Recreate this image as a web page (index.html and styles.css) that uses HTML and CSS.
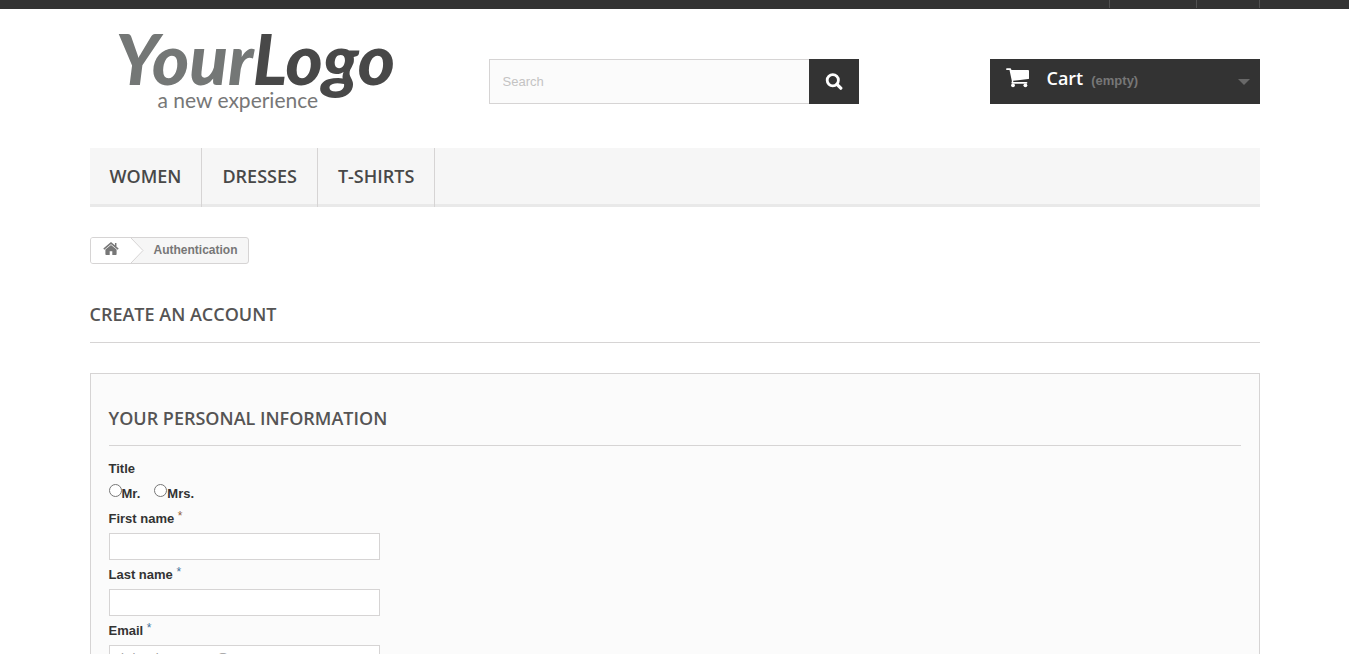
FILE: index.html
```html
<!DOCTYPE html>
<html lang="en">
<head>
<meta charset="utf-8">
<meta name="viewport" content="width=device-width, initial-scale=1">
<title>Create an account</title>
<link rel="stylesheet" href="styles.css">
</head>
<body>
<div class="topbar"><div class="container topbar-cells"><span class="cell cell-wide"></span><span class="cell"></span></div></div>
<div class="container">
  <header class="header">
    <a class="logo" href="#">
      <span class="logo-name"><span class="logo-your">Your</span><span class="logo-rest">Logo</span></span>
      <span class="logo-tag">a new experience</span>
    </a>
    <form class="search">
      <input class="search-input" type="text" placeholder="Search" aria-label="Search">
      <button class="search-button" type="button" aria-label="Submit search">
        <svg width="18" height="18" viewBox="0 0 18 18" fill="none" stroke="#fff"><circle cx="7.8" cy="7.2" r="5.6" stroke-width="2.8"/><path d="M12 11.400l3.8 3.8" stroke-width="3.2" stroke-linecap="round"/></svg>
      </button>
    </form>
    <a class="cart" href="#">
      <svg class="cart-icon" width="24" height="20" viewBox="0 0 24 20" fill="#fff"><path d="M0 1.2Q0 .3 1 .3H4.200Q5 .3 5.200 1.200L5.400 2H22.200Q23 2 23 2.900V10.200Q23 11 22.200 11.100L7.200 12.800 7.300 14H20.500Q21.400 14 21.400 14.800T20.500 15.700H6.300Q5.400 15.700 5.400 14.800L5.900 13.200 3.500 2H1Q0 2 0 1.200Z"/><circle cx="7" cy="17.300" r="1.900"/><circle cx="19.400" cy="17.300" r="1.900"/></svg>
      <b class="cart-title">Cart</b><span class="cart-count">(empty)</span>
      <svg class="cart-arrow" width="12" height="6" viewBox="0 0 12 6"><path d="M0 0h12L6 6z" fill="#686868"/></svg>
    </a>
  </header>
  <nav class="menu"><a href="#">WOMEN</a><a href="#">DRESSES</a><a href="#">T-SHIRTS</a></nav>
  <div class="breadcrumb">
    <a class="home" href="#" aria-label="Home">
      <svg width="16" height="14" viewBox="0 0 16 14" fill="#777"><path d="M8 2.900L13.600 7.600V12.200Q13.600 13 12.800 13H9.300V9.200H6.700V13H3.200Q2.400 13 2.400 12.200V7.600Z"/><path d="M.8 7.100L8 1.100l7.200 6M12.700 1v4" fill="none" stroke="#777" stroke-width="1.500"/></svg>
    </a>
    <svg class="chevron" width="13" height="25" viewBox="0 0 13 25"><path d="M0 0L12 12.500 0 25z" fill="#fff"/><path d="M0 0L12 12.500 0 25" fill="none" stroke="#d6d4d4"/></svg>
    <span class="crumb">Authentication</span>
  </div>
  <h1 class="page-title">CREATE AN ACCOUNT</h1>
  <form class="box">
    <h2 class="box-title">YOUR PERSONAL INFORMATION</h2>
    <div class="label" id="title-label">Title</div>
    <div class="radios" role="radiogroup" aria-labelledby="title-label">
      <label><input type="radio" name="title">Mr.</label>
      <label><input type="radio" name="title">Mrs.</label>
    </div>
    <label class="label" for="first">First name <sup class="brown">*</sup></label>
    <input class="field" id="first" type="text">
    <label class="label" for="last">Last name <sup>*</sup></label>
    <input class="field" id="last" type="text">
    <label class="label" for="email">Email <sup>*</sup></label>
    <input class="field" id="email" type="email" value="shrivaskumar.ace@one.com">
  </form>
</div>
</body>
</html>
```
FILE: styles.css
```css
* { box-sizing: border-box; }
html, body { height: 100%; }
body { margin: 0; overflow: hidden; background: #fff; color: #333; font: bold 13px/18px "Liberation Sans", Arial, sans-serif; }
a { color: inherit; text-decoration: none; }
.container { max-width: 1170px; margin: 0 auto; }
.topbar { height: 9px; background: #333; }
.topbar-cells { display: flex; justify-content: flex-end; height: 8px; border-right: 1px solid #515151; }
.cell { width: 63px; border-left: 1px solid #515151; }
.cell-wide { width: 87px; }
.header { display: grid; grid-template-columns: 399fr 370px 131fr 270px; height: 139px; }
.logo { display: flex; flex-direction: column; padding: 16px 0 0 26px; white-space: nowrap; }
.logo-name { font: italic 900 71px/65px "Brush Script MT", Lato, sans-serif; }
.logo-your { color: #747776; }
.logo-rest { color: #484848; }
.logo-tag { padding-left: 42px; color: #777; font: 21px/20px Lato, sans-serif; }
.search { display: flex; height: 45px; margin-top: 50px; }
.search-input { flex: 1; min-width: 0; padding: 0 13px; border: 1px solid #d6d4d4; border-right: 0; border-radius: 0; background: #fbfbfb; font: 13px "Liberation Sans", Arial, sans-serif; }
.search-input::placeholder { color: #c4c3c3; }
.search-button { display: flex; align-items: center; justify-content: center; width: 50px; padding: 0; border: 0; background: #333; }
.cart { grid-column: 4; display: flex; align-items: center; height: 45px; margin-top: 50px; padding: 0 10px 0 16px; background: #333; color: #fff; }
.cart-icon { margin-bottom: 8px; }
.cart-title { margin: 0 8px 8px 17px; font: 600 18px/20px "Open Sans", sans-serif; }
.cart-count { margin-bottom: 2px; color: #777; }
.cart-arrow { margin-left: auto; }
.menu { display: flex; height: 59px; border-bottom: 3px solid #e9e9e9; background: #f6f6f6; }
.menu a { height: 59px; padding: 16px 20px; border-right: 1px solid #d6d4d4; color: #484848; font: 600 18px/24px "Open Sans", sans-serif; }
.breadcrumb { display: flex; width: fit-content; height: 27px; margin-top: 30px; overflow: hidden; border: 1px solid #d6d4d4; border-radius: 3px; background: #f6f6f6; color: #777; font-size: 12px; line-height: 24px; }
.home { display: flex; align-items: flex-start; width: 40px; padding: 4px 0 0 12px; background: #fff; }
.crumb { padding: 0 10px; }
.page-title, .box-title { margin: 0; border-bottom: 1px solid #d6d4d4; color: #555454; font: 600 18px/22px "Open Sans", sans-serif; }
.page-title { margin: 39px 0 30px; padding-bottom: 17px; }
.box { padding: 33px 18px 23px; border: 1px solid #d6d4d4; background: #fbfbfb; }
.box-title { margin-bottom: 13px; padding-bottom: 16px; }
.label { display: block; height: 20px; margin-bottom: 4px; line-height: 20px; }
.label sup { color: #46749b; font-size: 12px; font-weight: 400; line-height: 0; vertical-align: 3px; }
.label .brown { color: #955f3b; }
.radios { display: flex; gap: 14px; height: 26px; }
.radios label { display: flex; line-height: 20px; padding-top: 1px; }
.radios input { width: 13px; height: 13px; margin: 0; }
.field { display: block; width: 271px; height: 27px; margin-bottom: 5px; padding: 0 5px 2px; border: 1px solid #d6d4d4; border-radius: 0; background: #fff; color: #9c9b9b; font: 13px/19px "Liberation Sans", Arial, sans-serif; }
```
